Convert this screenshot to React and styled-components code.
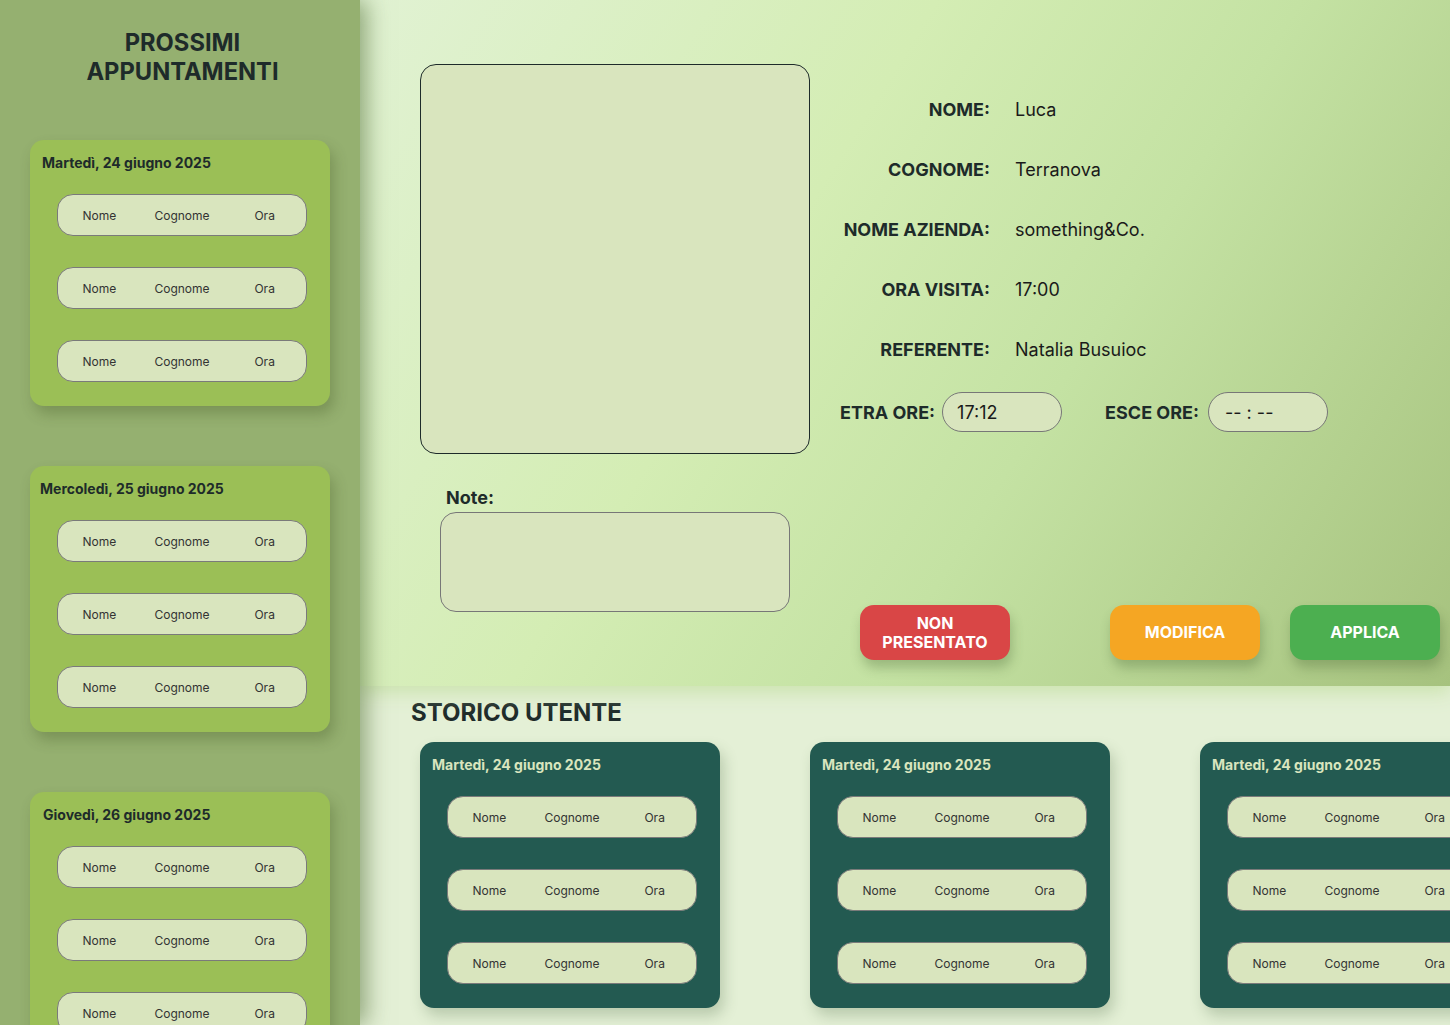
import React from "react";
import styled, { createGlobalStyle, css } from "styled-components";

const Global = createGlobalStyle`
  html, body { margin: 0; padding: 0; }
  body {
    font-family: Inter, "Noto Sans", Arial, sans-serif;
    background: #e4f0d6;
    color: #1e2b2a;
    overflow: hidden;
  }
  * { box-sizing: border-box; }
`;

const Page = styled.div`
  display: flex;
  width: 1450px;
  height: 1025px;
  overflow: hidden;
`;

const Sidebar = styled.aside`
  position: relative;
  z-index: 2;
  flex: 0 0 360px;
  height: 100%;
  background: #95b070;
  box-shadow: 6px 0 22px rgba(70, 100, 40, 0.55);
  padding: 28px 0 0 30px;
  display: flex;
  flex-direction: column;
  overflow: hidden;
`;

const SideTitle = styled.h1`
  margin: 0 0 54px -30px;
  width: 365px;
  text-align: center;
  font-size: 23.7px;
  line-height: 29px;
  font-weight: 700;
  color: #1e2b2a;
`;

const CardStack = styled.div`
  display: flex;
  flex-direction: column;
  gap: 60px;
`;

const DayCard = styled.section`
  flex: 0 0 auto;
  width: 300px;
  border-radius: 14px;
  padding: 12px 0 24px;
  ${(p) =>
    p.$dark
      ? css`
          background: #235a51;
          box-shadow: 4px 8px 14px rgba(60, 90, 50, 0.25);
        `
      : css`
          background: #9bbf56;
          box-shadow: 4px 8px 14px rgba(60, 80, 30, 0.3);
        `}
`;

const DayTitle = styled.h3`
  margin: 0 0 20px;
  padding-left: ${(p) => p.$indent || 12}px;
  font-size: 14px;
  line-height: 22px;
  font-weight: 700;
  color: ${(p) => (p.$dark ? "#d9e5be" : "#1e2b2a")};
`;

const RowList = styled.div`
  display: flex;
  flex-direction: column;
  gap: 31px;
  margin-left: 27px;
`;

const Row = styled.div`
  width: 250px;
  height: 42px;
  border: 1px solid #7a7a7a;
  border-radius: 16px;
  background: #d9e5be;
  display: grid;
  grid-template-columns: repeat(3, 1fr);
  align-items: center;
  justify-items: center;
  font-size: 12px;
  color: #333;
`;

const Main = styled.main`
  flex: 1 1 auto;
  min-width: 0;
  display: flex;
  flex-direction: column;
  height: 100%;
`;

const Top = styled.div`
  position: relative;
  z-index: 1;
  flex: 0 0 686px;
  background: linear-gradient(122deg, #e1f2d3 0%, #d4edb4 38%, #c4e2a3 62%, #a6c27e 100%);
  box-shadow: 0 6px 18px rgba(200, 225, 170, 0.95);
  padding: 64px 0 0 60px;
  display: flex;
  gap: 30px;
`;

const LeftCol = styled.div`
  display: flex;
  flex-direction: column;
`;

const Photo = styled.div`
  width: 390px;
  height: 390px;
  border: 1px solid #1e2b2a;
  border-radius: 16px;
  background: #d9e5be;
`;

const NoteLabel = styled.label`
  margin: 33px 0 3px 26px;
  font-size: 18px;
  line-height: 22px;
  font-weight: 700;
  color: #1e2b2a;
`;

const NoteBox = styled.div`
  margin-left: 20px;
  width: 350px;
  height: 100px;
  border: 1px solid #777;
  border-radius: 16px;
  background: #d9e5be;
`;

const RightCol = styled.div`
  display: flex;
  flex-direction: column;
`;

const InfoGrid = styled.dl`
  margin: 15px 0 0;
  display: grid;
  grid-template-columns: 150px auto;
  grid-auto-rows: 60px;
  column-gap: 25px;
  align-items: center;
  font-size: 18px;
`;

const InfoLabel = styled.dt`
  text-align: right;
  font-weight: 700;
  color: #1e2b2a;
  white-space: nowrap;
`;

const InfoValue = styled.dd`
  margin: 0;
  color: #1a1a1a;
`;

const TimeRow = styled.div`
  margin-top: 13px;
  display: flex;
  align-items: center;
  height: 40px;
`;

const TimeLabel = styled.span`
  font-size: 18px;
  font-weight: 700;
  color: #1e2b2a;
  margin-left: ${(p) => p.$offset || 0}px;
  white-space: nowrap;
`;

const TimeInput = styled.div`
  margin-left: ${(p) => p.$offset || 7}px;
  width: 120px;
  height: 40px;
  border: 1px solid #777;
  border-radius: 20px;
  background: #d9e5be;
  display: flex;
  align-items: center;
  padding-left: ${(p) => p.$pad || 14}px;
  font-size: 18px;
  color: #1a1a1a;
`;

const ButtonRow = styled.div`
  margin-top: 173px;
  display: flex;
  padding-left: 20px;
`;

const ActionButton = styled.button`
  width: 150px;
  height: 55px;
  margin-left: ${(p) => p.$gap || 0}px;
  border: none;
  border-radius: 14px;
  background: ${(p) => p.$color};
  color: #fff;
  font-family: Inter, "Noto Sans", Arial, sans-serif;
  font-size: 16px;
  line-height: 19px;
  font-weight: 700;
  box-shadow: 2px 8px 12px rgba(60, 90, 40, 0.3);
  display: flex;
  align-items: center;
  justify-content: center;
  text-align: center;
`;

const Bottom = styled.div`
  flex: 1 1 auto;
  padding: 12px 0 0 51px;
  background: #e4f0d6;
`;

const SectionTitle = styled.h2`
  margin: 0 0 14px;
  font-size: 24px;
  line-height: 30px;
  font-weight: 700;
  color: #1e2b2a;
`;

const HistoryRow = styled.div`
  display: flex;
  gap: 90px;
  padding-left: 9px;
`;

const days = [
  { title: "Martedì, 24 giugno 2025", indent: 12 },
  { title: "Mercoledì, 25 giugno 2025", indent: 10 },
  { title: "Giovedì, 26 giugno 2025", indent: 13 },
];

function Card({ title, dark, indent }) {
  return (
    <DayCard $dark={dark}>
      <DayTitle $dark={dark} $indent={indent}>{title}</DayTitle>
      <RowList>
        {[0, 1, 2].map((i) => (
          <Row key={i}>
            <span>Nome</span>
            <span>Cognome</span>
            <span>Ora</span>
          </Row>
        ))}
      </RowList>
    </DayCard>
  );
}

const info = [
  ["NOME:", "Luca"],
  ["COGNOME:", "Terranova"],
  ["NOME AZIENDA:", "something&Co."],
  ["ORA VISITA:", "17:00"],
  ["REFERENTE:", "Natalia Busuioc"],
];

export default function App() {
  return (
    <>
      <Global />
      <Page>
        <Sidebar>
          <SideTitle>
            PROSSIMI
            <br />
            APPUNTAMENTI
          </SideTitle>
          <CardStack>
            {days.map((d) => (
              <Card key={d.title} title={d.title} indent={d.indent} />
            ))}
          </CardStack>
        </Sidebar>
        <Main>
          <Top>
            <LeftCol>
              <Photo />
              <NoteLabel>Note:</NoteLabel>
              <NoteBox />
            </LeftCol>
            <RightCol>
              <InfoGrid>
                {info.map(([l, v]) => (
                  <React.Fragment key={l}>
                    <InfoLabel>{l}</InfoLabel>
                    <InfoValue>{v}</InfoValue>
                  </React.Fragment>
                ))}
              </InfoGrid>
              <TimeRow>
                <TimeLabel>ETRA ORE:</TimeLabel>
                <TimeInput>17:12</TimeInput>
                <TimeLabel $offset={43}>ESCE ORE:</TimeLabel>
                <TimeInput $offset={9} $pad={16}>-- : --</TimeInput>
              </TimeRow>
              <ButtonRow>
                <ActionButton $color="#d94646">
                  NON
                  <br />
                  PRESENTATO
                </ActionButton>
                <ActionButton $color="#f5a623" $gap={100}>MODIFICA</ActionButton>
                <ActionButton $color="#4caf50" $gap={30}>APPLICA</ActionButton>
              </ButtonRow>
            </RightCol>
          </Top>
          <Bottom>
            <SectionTitle>STORICO UTENTE</SectionTitle>
            <HistoryRow>
              {[0, 1, 2].map((i) => (
                <Card key={i} dark title="Martedì, 24 giugno 2025" />
              ))}
            </HistoryRow>
          </Bottom>
        </Main>
      </Page>
    </>
  );
}
